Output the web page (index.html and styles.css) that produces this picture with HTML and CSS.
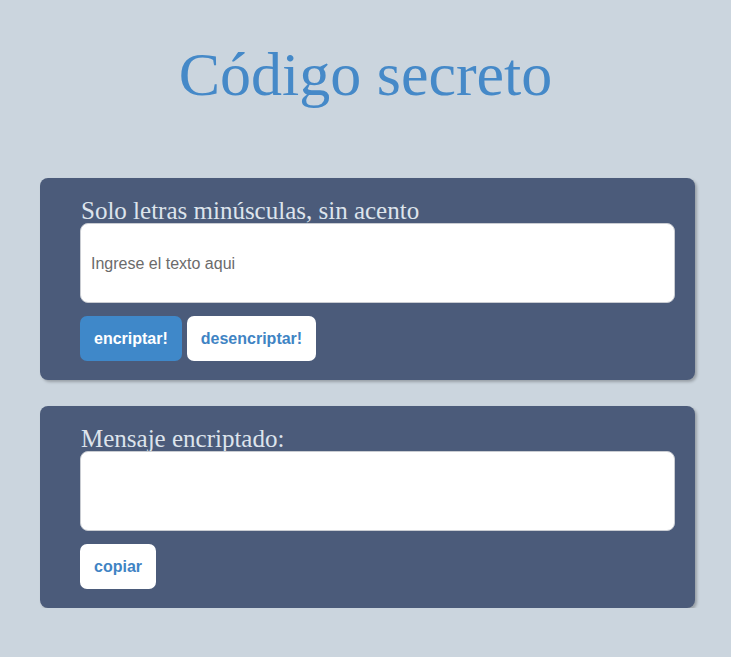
FILE: index.html
```html
<!DOCTYPE html>
<html lang="es">
<head>
<meta charset="utf-8">
<title>Código secreto</title>
<link rel="stylesheet" href="styles.css">
</head>
<body>
<h1 class="title">Código secreto</h1>
<main class="main">
  <section class="card">
    <label class="label" for="entrada">Solo letras minúsculas, sin acento</label>
    <textarea id="entrada" class="field" placeholder="Ingrese el texto aqui"></textarea>
    <div class="actions">
      <button class="btn btn-primary">encriptar!</button>
      <button class="btn">desencriptar!</button>
    </div>
  </section>
  <section class="card">
    <label class="label" for="salida">Mensaje encriptado:</label>
    <textarea id="salida" class="field" readonly></textarea>
    <div class="actions">
      <button class="btn">copiar</button>
    </div>
  </section>
</main>
</body>
</html>
```
FILE: styles.css
```css
html, body {
  margin: 0;
  padding: 0;
}
body {
  background: #cbd5de;
  font-family: "Liberation Serif", "Times New Roman", serif;
}
.title {
  margin: 38px 0 68px;
  text-align: center;
  font-weight: normal;
  font-size: 62px;
  line-height: 72px;
  color: #4589c8;
}
.main {
  display: flex;
  flex-direction: column;
  gap: 26px;
  margin: 0 36px 0 40px;
}
.card {
  background: #4b5b7a;
  border-radius: 8px;
  box-shadow: 2px 2px 3px rgba(0, 0, 0, 0.25);
  padding: 20px 20px 19px 40px;
  display: flex;
  flex-direction: column;
}
.label {
  display: block;
  font-size: 25px;
  line-height: 25px;
  color: #dde4ec;
  padding-left: 1px;
}
.field {
  display: block;
  box-sizing: border-box;
  width: 100%;
  height: 80px;
  margin: 0;
  padding: 31px 10px 10px;
  border: 1px solid #c9ccd2;
  border-radius: 8px;
  background: #fff;
  font-family: "Liberation Sans", Arial, sans-serif;
  font-size: 16px;
  line-height: 18px;
  color: #333;
  resize: none;
  outline: none;
}
.field::placeholder {
  color: #6b6b6b;
}
.actions {
  display: flex;
  gap: 5px;
  margin-top: 13px;
}
.btn {
  height: 45px;
  padding: 0 14px;
  border: none;
  border-radius: 7px;
  background: #fff;
  color: #3f84c4;
  font-family: "Liberation Sans", Arial, sans-serif;
  font-weight: bold;
  font-size: 16px;
  cursor: pointer;
}
.btn-primary {
  background: #3f88c9;
  color: #fff;
}
```
